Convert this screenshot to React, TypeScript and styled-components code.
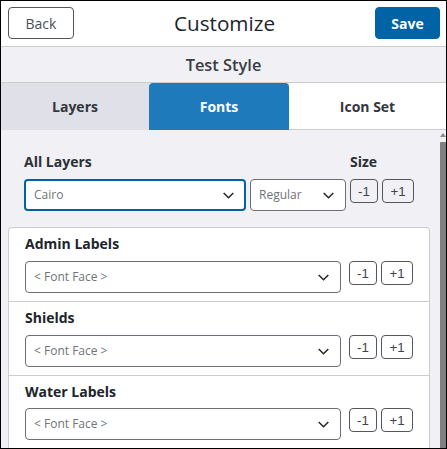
import React from "react";
import styled, { createGlobalStyle } from "styled-components";

const Global = createGlobalStyle`
  html, body { margin: 0; padding: 0; background: #fff; }
  * { box-sizing: border-box; }
  #root { width: 447px; height: 449px; }
`;

const Frame = styled.div`
  width: 447px;
  height: 449px;
  border: 1px solid #000;
  display: flex;
  flex-direction: column;
  overflow: hidden;
  font-family: "Open Sans", "Noto Sans", sans-serif;
  color: #2b2f36;
  background: #f0f0f5;
`;

const Header = styled.header`
  flex: none;
  height: 46px;
  padding: 6px 6px 6px 7px;
  display: flex;
  align-items: flex-start;
  justify-content: space-between;
  background: #fff;
  border-bottom: 1px solid #ccc;
`;

const Title = styled.h1`
  margin: 0;
  font-size: 20.7px;
  font-weight: 400;
  line-height: 32px;
  color: #1d2430;
`;

const HeaderButton = styled.button<{ $primary?: boolean }>`
  height: 32px;
  width: ${(p) => (p.$primary ? "65px" : "66px")};
  padding: 0;
  border-radius: 4px;
  border: 1px solid ${(p) => (p.$primary ? "#0063a6" : "#53565c")};
  background: ${(p) => (p.$primary ? "#0063a6" : "#fff")};
  color: ${(p) => (p.$primary ? "#fff" : "#4a4f57")};
  font-family: inherit;
  font-size: 14px;
  font-weight: ${(p) => (p.$primary ? 700 : 400)};
`;

const Subtitle = styled.div`
  flex: none;
  height: 36px;
  display: flex;
  align-items: center;
  justify-content: center;
  background: #f0f0f5;
  border-bottom: 1px solid #ccc;
  font-size: 16.4px;
  font-weight: 600;
  color: #3a3d44;
`;

const Tabs = styled.nav`
  flex: none;
  height: 47px;
  display: grid;
  grid-template-columns: 148px 140px 157px;
`;

const Tab = styled.div<{ $state: "idle" | "active" | "open" }>`
  display: flex;
  align-items: center;
  justify-content: center;
  font-size: 14px;
  font-weight: 700;
  color: ${(p) => (p.$state === "active" ? "#fff" : "#33363d")};
  background: ${(p) =>
    p.$state === "active" ? "#1f7abc" : p.$state === "idle" ? "#dfe0e8" : "#fff"};
  border-radius: ${(p) => (p.$state === "active" ? "4px 4px 0 0" : "0")};
  border-bottom: ${(p) => (p.$state === "open" ? "1px solid #ccc" : "none")};
`;

const Body = styled.div`
  flex: 1;
  min-height: 0;
  display: flex;
  overflow: hidden;
`;

const Content = styled.main`
  flex: 1;
  min-width: 0;
  padding: 23px 0 0 7px;
`;

const Rail = styled.div`
  flex: none;
  width: 6px;
  display: flex;
  flex-direction: column;
  align-items: center;
`;

const RailArrow = styled.svg`
  flex: none;
  width: 6px;
  height: 12px;
`;

const RailThumb = styled.div`
  flex: 1;
  width: 6px;
  background: #7f7f7f;
  border-radius: 1px 1px 0 0;
`;

const GlobalPanel = styled.section`
  display: grid;
  grid-template-columns: 222px 96px auto;
  column-gap: 4px;
  padding-left: 16px;
`;

const Label = styled.div`
  font-size: 14px;
  font-weight: 700;
  line-height: 18px;
  color: #2b2f36;
`;

const GlobalLabel = styled(Label)`
  margin-bottom: 8px;
`;

const SizeLabel = styled(GlobalLabel)`
  grid-column: 3;
`;

const SelectBox = styled.div<{ $focus?: boolean }>`
  height: 32px;
  display: flex;
  align-items: center;
  justify-content: space-between;
  background: #fff;
  border-radius: 4px;
  border: ${(p) => (p.$focus ? "2px solid #0063a6" : "1px solid #6b6e75")};
  padding: 0 ${(p) => (p.$focus ? "10px" : "11px")} 2px 8px;
  font-size: 12px;
  color: #6f747c;
`;

const ChevronSvg = styled.svg`
  width: 11px;
  height: 7px;
  flex: none;
  margin-top: 2px;
`;

const Chevron = () => (
  <ChevronSvg viewBox="0 0 11 7" aria-hidden="true">
    <path d="M0.7 1 L5.5 5.8 L10.3 1" fill="none" stroke="#23262b" strokeWidth="1.5" />
  </ChevronSvg>
);

const Stepper = styled.div`
  display: flex;
  gap: 4px;
  align-items: flex-start;
`;

const StepButton = styled.button<{ $wide?: boolean }>`
  width: ${(p) => (p.$wide ? "32px" : "28px")};
  height: 24px;
  padding: 0;
  border: 1px solid #53565c;
  border-radius: 4px;
  background: #f0f0f5;
  color: #3f434a;
  font-family: "Liberation Sans", Arial, sans-serif;
  font-size: 13.3px;
`;

const CardStepButton = styled(StepButton)`
  background: #fff;
`;

const Card = styled.section`
  margin-top: 16px;
  width: 422px;
  background: #fff;
  border: 1px solid #ccccd4;
  border-bottom: none;
  border-radius: 4px 4px 0 0;
`;

const RowLabel = styled(Label)`
  margin-bottom: 8px;
  color: #20242b;
`;

const Row = styled.div`
  height: 74px;
  padding: 7px 16px 0 16px;
  border-bottom: 1px solid #ccccd4;

  &:last-child {
    border-bottom: none;
  }

  &:last-child ${RowLabel} {
    margin-bottom: 7px;
  }
`;

const RowControls = styled.div`
  display: grid;
  grid-template-columns: 316px auto;
  column-gap: 8px;
`;

const layers = ["Admin Labels", "Shields", "Water Labels"];

export default function App() {
  return (
    <Frame>
      <Global />
      <Header>
        <HeaderButton>Back</HeaderButton>
        <Title>Customize</Title>
        <HeaderButton $primary>Save</HeaderButton>
      </Header>
      <Subtitle>Test Style</Subtitle>
      <Tabs>
        <Tab $state="idle">Layers</Tab>
        <Tab $state="active">Fonts</Tab>
        <Tab $state="open">Icon Set</Tab>
      </Tabs>
      <Body>
        <Content>
          <GlobalPanel>
            <GlobalLabel>All Layers</GlobalLabel>
            <span />
            <SizeLabel>Size</SizeLabel>
            <SelectBox $focus>
              Cairo
              <Chevron />
            </SelectBox>
            <SelectBox>
              Regular
              <Chevron />
            </SelectBox>
            <Stepper>
              <StepButton>-1</StepButton>
              <StepButton $wide>+1</StepButton>
            </Stepper>
          </GlobalPanel>
          <Card>
            {layers.map((name) => (
              <Row key={name}>
                <RowLabel>{name}</RowLabel>
                <RowControls>
                  <SelectBox>
                    {"< Font Face >"}
                    <Chevron />
                  </SelectBox>
                  <Stepper>
                    <CardStepButton>-1</CardStepButton>
                    <CardStepButton $wide>+1</CardStepButton>
                  </Stepper>
                </RowControls>
              </Row>
            ))}
          </Card>
        </Content>
        <Rail>
          <RailArrow viewBox="0 0 6 12" aria-hidden="true">
            <path d="M3 3 L6 7 L0 7 Z" fill="#8a8a8a" />
          </RailArrow>
          <RailThumb />
        </Rail>
      </Body>
    </Frame>
  );
}
